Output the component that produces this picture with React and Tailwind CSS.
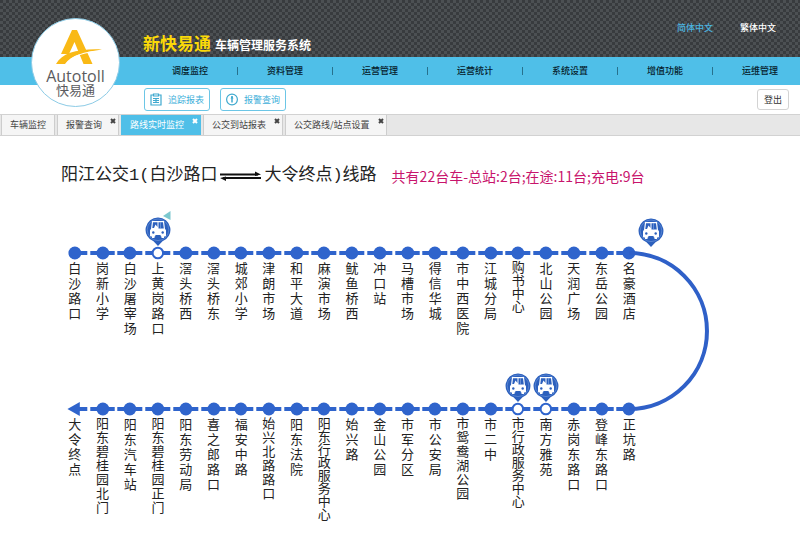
import clsx from "clsx";

const NAV = ["调度监控", "资料管理", "运营管理", "运营统计", "系统设置", "增值功能", "运维管理"];

const TABS = [
  { name: "车辆监控" },
  { name: "报警查询", closable: true },
  { name: "路线实时监控", closable: true, active: true },
  { name: "公交到站报表", closable: true },
  { name: "公交路线/站点设置", closable: true },
];

const OUTBOUND = [
  { name: "白沙路口" },
  { name: "岗新小学" },
  { name: "白沙屠宰场" },
  { name: "上黄岗路口", bus: true, flag: true },
  { name: "滘头桥西" },
  { name: "滘头桥东" },
  { name: "城郊小学" },
  { name: "津朗市场" },
  { name: "和平大道" },
  { name: "麻演市场" },
  { name: "鱿鱼桥西" },
  { name: "冲口站" },
  { name: "马槽市场" },
  { name: "得信华城" },
  { name: "市中西医院" },
  { name: "江城分局" },
  { name: "购书中心", dense: true },
  { name: "北山公园" },
  { name: "天润广场" },
  { name: "东岳公园" },
  { name: "名豪酒店" },
];

const INBOUND = [
  { name: "大令终点", end: true },
  { name: "阳东碧桂园北门" },
  { name: "阳东汽车站" },
  { name: "阳东碧桂园正门" },
  { name: "阳东劳动局" },
  { name: "喜之郎路口" },
  { name: "福安中路" },
  { name: "始兴北路路口" },
  { name: "阳东法院" },
  { name: "阳东行政服务中心", dense: true },
  { name: "始兴路" },
  { name: "金山公园" },
  { name: "市军分区" },
  { name: "市公安局" },
  { name: "市鸳鸯湖公园" },
  { name: "市二中" },
  { name: "市行政服务中心", bus: true, dense: true },
  { name: "南方雅苑", bus: true },
  { name: "赤岗东路口" },
  { name: "登峰东路口" },
  { name: "正坑路" },
];

function Logo() {
  return (
    <a
      href="#"
      className="absolute left-[31px] top-[18px] z-10 flex h-[89px] w-[89px] flex-col items-center rounded-full border border-[#8ccbe6] bg-white pt-[11px]"
    >
      <svg width="46" height="35" viewBox="0 0 46 35" className="ml-[6px]" aria-hidden="true">
        <path d="M16 0h5l15.500 34H27.500L18.500 12 13 24H5z" fill="#f9b916" />
        <path d="M0 34C6 23 22 18.500 46 19.500 29 22 15 25 9 34z" fill="#f9b916" />
        <path d="M10 34.500C15 26.500 26 23 38 21.500" fill="none" stroke="#fff" strokeWidth="1.200" />
      </svg>
      <span className="font-['Open_Sans',sans-serif] text-[16px] leading-[22px] text-[#5b5b5e]">Autotoll</span>
      <span className="-mt-[4px] text-[13px] leading-[14px] text-[#5b5b5e]">快易通</span>
    </a>
  );
}

function Header() {
  return (
    <header className="relative">
      <div className="flex h-[57px] items-end bg-[conic-gradient(#4c5053_25%,#383b3e_0_50%,#4c5053_0_75%,#383b3e_0)] bg-[length:6px_6px] pl-[143px] pr-[24px]">
        <h1 className="flex items-baseline gap-1 pb-[2px] font-bold leading-[20px] text-white">
          <span className="text-[17px] text-[#fbd908]">新快易通</span>
          <span className="text-[12px]">车辆管理服务系统</span>
        </h1>
        <div className="mb-[22px] ml-auto flex gap-[27px] text-[9px] font-medium leading-[14px]">
          <a href="#" className="text-[#4bb4e0]">简体中文</a>
          <a href="#" className="text-white">繁体中文</a>
        </div>
      </div>
      <nav className="flex h-[28px] items-center justify-between bg-[#4fbfe8] pl-[172px] pr-[22px] text-[9px] font-medium text-[#06202b]">
        {NAV.map((item, i) => [
          i > 0 && <span key={i} className="h-[8px] w-px bg-[#27718d]" />,
          <a key={item} href="#">{item}</a>,
        ])}
      </nav>
      <Logo />
    </header>
  );
}

function Toolbar() {
  const button =
    "flex h-[23px] items-center gap-[6px] rounded-[3px] border border-[#6cc6e6] bg-white px-[5px] text-[9px] text-[#3fb0da]";
  return (
    <div className="flex h-[29px] items-center gap-[10px] pl-[144px] pr-[11px]">
      <button className={button}>
        <svg width="12" height="13" viewBox="0 0 12 13" fill="none" stroke="#3fa9cf" strokeWidth="1.200" aria-hidden="true">
          <path d="M3 2H1v10h10V2H9M3.500 1h5v2h-5zM3 5.500h6M3 7.500h6M3 9.500h6M6 5v5" />
        </svg>
        追踪报表
      </button>
      <button className={button}>
        <svg width="12" height="13" viewBox="0 0 12 13" fill="none" stroke="#3fa9cf" strokeWidth="1.200" aria-hidden="true">
          <circle cx="6" cy="6.500" r="5.400" />
          <path d="M6 3v6.500" strokeWidth="1.500" />
          <path d="M4.500 5.500L6 3l1.500 2.500z" fill="#3fa9cf" stroke="none" />
        </svg>
        报警查询
      </button>
      <button className="ml-auto h-[21px] rounded-[3px] border border-[#d3d3d3] px-[6px] text-[9px] text-[#333]">
        登出
      </button>
    </div>
  );
}

function Tabs() {
  return (
    <div className="flex h-[22px] items-end gap-[2px] border-y border-[#d2d2d2] bg-[#e7e7e7] pl-px">
      {TABS.map((tab) => (
        <div
          key={tab.name}
          className={clsx(
            "flex h-[20px] items-start border-x pl-[8px] text-[9px]",
            tab.active
              ? "border-[#4fbfe8] bg-[#4fbfe8] text-white"
              : "border-[#cdcdcd] bg-[#f5f5f5] text-[#444]"
          )}
        >
          <button className={clsx("leading-[20px]", !tab.closable && "pr-[8px]")}>{tab.name}</button>
          {tab.closable && (
            <button aria-label="关闭" className="ml-[8px] mr-[2px] mt-[3px]">
              <svg width="6" height="6" viewBox="0 0 6 6" stroke="currentColor" strokeWidth="2" aria-hidden="true">
                <path d="M1 1l4 4M5 1L1 5" />
              </svg>
            </button>
          )}
        </div>
      ))}
    </div>
  );
}

function BusPin({ className }) {
  return (
    <svg width="26" height="29" viewBox="0 0 26 29" className={className} aria-hidden="true">
      <path d="M13 0.500a12.300 12.300 0 0 1 4.500 23.800L13 29l-4.500-4.700A12.300 12.300 0 0 1 13 0.500z" fill="#2c60bd" />
      <circle cx="13" cy="12.800" r="10.800" fill="none" stroke="#7fa4e2" strokeWidth="0.500" />
      <path d="M7 4h12l1 8q1 0.500 1 1.500v5q0 1-1 1h-14q-1 0-1-1v-5q0-1 1-1.500z" fill="#fff" />
      <path d="M8 5.200h4.500V10L10.500 7.500 9 11H7.300zM13.500 5.200h4.500l0.800 6.300h-5.300z" fill="#2c60bd" />
      <path d="M15.500 5v7" stroke="#8fb0e8" strokeWidth="0.600" />
      <circle cx="8.300" cy="15.500" r="1.200" fill="#2c60bd" />
      <circle cx="17.700" cy="15.500" r="1.200" fill="#2c60bd" />
      <path d="M10.500 18h5l0.500 2h-6z" fill="#2c60bd" />
      <path d="M7 19h2.500v2H7zM16.500 19H19v2h-2.500z" fill="#fff" />
    </svg>
  );
}

function Track({ station, first, last }) {
  return (
    <svg viewBox="0 0 28 14" preserveAspectRatio="none" className="h-[14px] w-full overflow-visible" aria-hidden="true">
      <path d={`M${first ? 14 : 0} 7H${last ? 14 : 28}`} stroke="#2f64cc" strokeWidth="4" />
      {!first && <path d="M-1.300 7h2.600" stroke="#fff" strokeWidth="4" />}
      {!last && <path d="M26.700 7h2.600" stroke="#fff" strokeWidth="4" />}
      {station.end ? (
        <path d="M6.500 7L19 0v14z" fill="#2f64cc" />
      ) : station.bus ? (
        <circle cx="14" cy="7" r="5.300" fill="#fff" stroke="#2f64cc" strokeWidth="2" />
      ) : (
        <circle cx="14" cy="7" r="6.500" fill="#2f64cc" />
      )}
    </svg>
  );
}

function Line({ stations }) {
  return (
    <ol className="grid grid-cols-21">
      {stations.map((s, i) => (
        <li key={s.name} className="flex flex-col items-center">
          <div className="relative flex h-[28px] items-end">
            {s.bus && <BusPin />}
            {s.flag && (
              <svg width="8" height="9" viewBox="0 0 8 9" className="absolute -top-[7px] right-0" aria-hidden="true">
                <path d="M0 5L7.500 0v9z" fill="#7cc8cf" />
              </svg>
            )}
          </div>
          <Track station={s} first={i === 0} last={i === stations.length - 1} />
          <span
            className={clsx(
              "w-[13px] break-all text-[13px]",
              s.dense ? "leading-[13px]" : s.name.length > 5 ? "leading-[14px]" : "leading-[15px]"
            )}
          >
            {s.name}
          </span>
        </li>
      ))}
    </ol>
  );
}

export default function App() {
  return (
    <div className="min-h-screen bg-white font-['Noto_Sans_CJK_SC',sans-serif] text-[#222]">
      <Header />
      <Toolbar />
      <Tabs />

      <main className="pl-[61px] pr-[89px] pt-[26px]">
        <div className="flex items-center gap-[15px] whitespace-nowrap">
          <h2 className="flex items-center gap-[3px] font-['Liberation_Mono','Noto_Sans_CJK_SC',monospace] text-[17px] leading-[28px]">
            阳江公交1(白沙路口
            <svg width="41" height="10" viewBox="0 0 41 10" stroke="#111" strokeWidth="2" aria-hidden="true">
              <path d="M0 3.500h38M3 7h38" />
              <path d="M35 0.500l6 3L35 5zM6 10L0 7 6 5.500z" fill="#111" stroke="none" />
            </svg>
            大令终点)线路
          </h2>
          <p className="text-[14px] leading-[26px] text-[#c8146c]">
            共有22台车-总站:2台;在途:11台;充电:9台
          </p>
        </div>

        {/* both directions, joined by the turn on the right */}
        <div className="mt-[28px] flex items-start">
          <div className="flex flex-1 flex-col gap-[39px]">
            <Line stations={OUTBOUND} />
            <Line stations={INBOUND} />
          </div>
          <div className="relative -ml-[14px] mt-[33px] w-[82px]">
            <svg width="82" height="160" viewBox="0 0 82 160" fill="none" aria-hidden="true">
              <path d="M0 2A78 78 0 0 1 0 158" stroke="#2f60c8" strokeWidth="4" />
            </svg>
            <BusPin className="absolute -top-[33px] left-[9px]" />
          </div>
        </div>
      </main>
    </div>
  );
}
